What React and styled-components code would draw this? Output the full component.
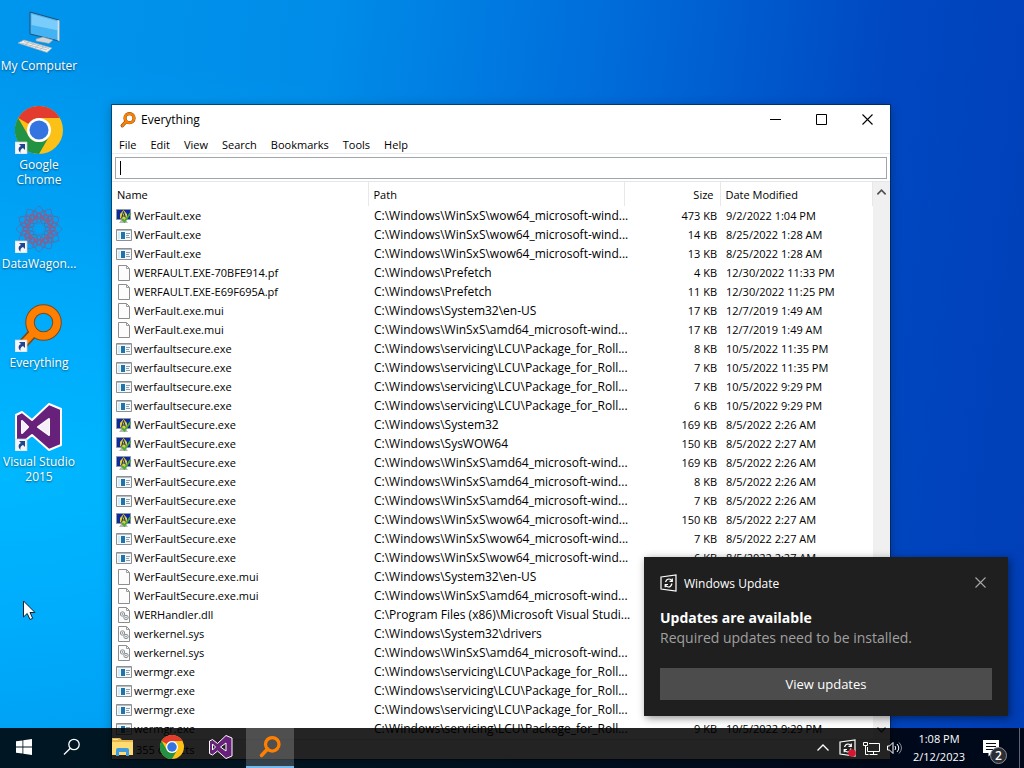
import React from 'react'
import styled, { createGlobalStyle } from 'styled-components'

const GlobalStyle = createGlobalStyle`
  * {
    box-sizing: border-box;
  }

  body {
    margin: 0;
    font-family: 'Open Sans', 'Noto Sans', sans-serif;
    font-size: 12px;
    overflow: hidden;
  }

  button,
  input {
    font: inherit;
    color: inherit;
    border: 0;
    margin: 0;
    padding: 0;
    background: none;
  }
`

const Desktop = styled.main`
  position: relative;
  min-height: 100vh;
  background:
    radial-gradient(ellipse at 0% 62%, #00b8ff 0%, rgba(0, 176, 255, 0.85) 22%, rgba(0, 150, 245, 0) 62%),
    linear-gradient(97deg, #0096ee 0%, #008ce8 30%, #006cda 55%, #0048c2 80%, #003eb6 100%);
`

const Shortcuts = styled.nav`
  display: flex;
  flex-direction: column;
  width: 78px;
`

const Shortcut = styled.a`
  display: flex;
  flex-direction: column;
  align-items: center;
  gap: 3px;
  height: 99px;
  padding-top: 7px;
  color: #fff;
  line-height: 15px;
  text-align: center;
  text-decoration: none;
  text-shadow: 0 1px 2px rgba(0, 0, 0, 0.5);
`

const AppWindow = styled.section`
  position: absolute;
  top: 104px;
  right: 133px;
  bottom: 8px;
  left: 111px;
  display: flex;
  flex-direction: column;
  border: 1px solid rgba(0, 30, 60, 0.6);
  background: #fff;
  background-clip: padding-box;
  color: #000;
  box-shadow: 0 2px 10px rgba(0, 0, 0, 0.25);
`

const TitleBar = styled.header`
  display: flex;
  align-items: center;
  height: 29px;
  padding-left: 8px;
`

const WindowTitle = styled.h1`
  flex: 1;
  margin: 0 0 0 5px;
  font-size: 12px;
  font-weight: 400;
`

const CaptionButton = styled.button`
  display: grid;
  place-items: center;
  width: 46px;
  height: 29px;
`

const MenuBar = styled.nav`
  display: flex;
  height: 20px;
  border-bottom: 1px solid #ebebeb;
  font-size: 11px;
`

const MenuButton = styled.button`
  padding: 2px 7px 0;
  line-height: 17px;
`

const SearchBox = styled.div`
  display: flex;
  align-items: center;
  height: 22px;
  margin: 3px 3px 2px;
  padding: 0 4px;
  border: 1px solid #a0a5a8;
`

const Caret = styled.span`
  width: 1px;
  height: 14px;
  background: #000;
`

const SearchInput = styled.input`
  flex: 1;
  outline: none;
  caret-color: transparent;
`

const ListArea = styled.div`
  display: flex;
  flex: 1;
  min-height: 0;
  border-top: 1px solid #e3e6e8;
  overflow: hidden;
`

const TableArea = styled.div`
  flex: 1;
  min-width: 0;
`

const FileTable = styled.table`
  width: 100%;
  table-layout: fixed;
  border-collapse: collapse;
  font-size: 11px;
  white-space: nowrap;
`

const HeadCell = styled.th`
  height: 24px;
  padding: 0 6px 0 5px;
  border-right: 1px solid #e8e8e8;
  font-weight: 400;
  text-align: ${(props) => props.$align || 'left'};
`

const Cell = styled.td`
  height: 19px;
  padding: 0 3px 0 6px;
  line-height: 19px;
  text-align: ${(props) => props.$align || 'left'};
`

const NameCell = styled(Cell)`
  padding-left: 4px;
`

const PathCell = styled(Cell)`
  padding-right: 0;
  font-size: 12px;
`

const FileName = styled.span`
  display: flex;
  align-items: center;
  gap: 2px;
  height: 19px;
`

const ScrollTrack = styled.div`
  display: flex;
  flex-direction: column;
  justify-content: space-between;
  width: 17px;
  background: #f0f0f0;
`

const ScrollButton = styled.button`
  display: grid;
  place-items: center;
  height: 20px;
`

const StatusBar = styled.footer`
  height: 20px;
  padding-left: 24px;
  border-top: 1px solid #d7d7d7;
  background: #f8f8f8;
  font-size: 11px;
  line-height: 20px;
`

const Toast = styled.aside`
  position: absolute;
  right: 16px;
  bottom: 52px;
  width: 364px;
  padding: 16px;
  background: #1f1f1f;
  color: #fff;
  box-shadow: 2px 2px 8px rgba(0, 0, 0, 0.45);
`

const ToastHeader = styled.div`
  display: flex;
  align-items: center;
  gap: 7px;
  height: 20px;
  padding-right: 6px;
`

const ToastApp = styled.span`
  flex: 1;
`

const ToastTitle = styled.h2`
  margin: 15px 0 0;
  font-size: 14px;
  font-weight: 700;
  line-height: 20px;
`

const ToastText = styled.p`
  margin: 0 0 20px;
  color: #a0a0a0;
  font-size: 14px;
  line-height: 20px;
`

const ToastAction = styled.button`
  display: block;
  width: 100%;
  height: 32px;
  background: #4c4c4c;
  font-size: 13px;
`

const Taskbar = styled.footer`
  position: absolute;
  right: 0;
  bottom: 0;
  left: 0;
  display: flex;
  height: 40px;
  background: rgba(0, 0, 0, 0.86);
  color: #fff;
`

const TaskButton = styled.button`
  display: grid;
  place-items: center;
  width: 48px;
  height: 40px;
  border-bottom: 2px solid ${(props) => (props.$active ? '#76b9ed' : 'transparent')};
  background: ${(props) => (props.$active ? 'rgba(255, 255, 255, 0.2)' : 'none')};
  background-clip: padding-box;
`

const PinnedApps = styled.div`
  display: flex;
  flex: 1;
  gap: 1px;
  padding-left: 3px;
`

const TrayButton = styled.button`
  display: grid;
  place-items: center;
  width: 24px;
  height: 40px;
`

const Clock = styled.time`
  width: 64px;
  padding-top: 2px;
  font-size: 11px;
  line-height: 18px;
  text-align: center;
`

const ActionCenter = styled(TaskButton)`
  position: relative;
  padding-right: 8px;
  border-bottom: 0;
`

const Badge = styled.span`
  position: absolute;
  right: 12px;
  bottom: 4px;
  width: 17px;
  height: 17px;
  border: 1px solid #8a8f96;
  border-radius: 50%;
  background: #2b2e34;
  font-weight: 600;
  line-height: 15px;
`

const ShowDesktop = styled.button`
  width: 5px;
  border-left: 1px solid #5b6672;
`

const Pointer = styled.svg`
  position: absolute;
  top: 600px;
  left: 22px;
`

const ShortcutArrow = () => (
  <g>
    <path d="M0 36h12v12H0z" fill="#f4f6fa" stroke="#c8d0da" strokeWidth=".7" />
    <path d="M4 38h6v6L8 42c-2 1-3 2-2.500 4.800C2.500 44 3.500 41 6 40z" fill="#20458c" />
  </g>
)

const ComputerIcon = () => (
  <svg width="48" height="48" viewBox="0 0 48 48">
    <path d="M15 5l29 8v21l-29-7z" fill="#44b3f4" stroke="#244f70" />
    <path d="M16.500 7l26 7.200v9L16.500 18z" fill="#7acdfa" />
    <path d="M42.500 13v20.500l2 .5V13.500z" fill="#d8e1e8" />
    <path d="M21 32l7-2 10 3-4 3.500-13-2.500z" fill="#cfd5d8" stroke="#8798a4" strokeWidth=".6" />
    <path d="M3 36l6-3 28 8-5 4.500z" fill="#eef0ef" stroke="#9babb5" strokeWidth=".7" />
    <path d="M6 36l26 7M9 34.500l25 7M10 38l4-3M15 39.500l4-3M20 41l4-3M25 42.500l4-3" stroke="#adb7bd" strokeWidth=".8" />
  </svg>
)

const ChromeIcon = ({ size = 48, linked }) => (
  <svg width={size} height={size} viewBox="0 0 48 48">
    <circle cx="24" cy="24" r="24" fill="#fbc116" />
    <path d="M3.200 12A24 24 0 0 1 44.800 12H24a12 12 0 0 0-10.400 6z" fill="#e33b2e" />
    <path d="M3.200 12A24 24 0 0 0 24 48l10.400-18A12 12 0 0 1 13.600 30z" fill="#229342" />
    <circle cx="24" cy="24" r="12" fill="#fff" />
    <circle cx="24" cy="24" r="9.500" fill="#3474e0" />
    {linked && <ShortcutArrow />}
  </svg>
)

const petals = [0, 30, 60, 90, 120, 150, 180, 210, 240, 270, 300, 330]

const DataWagonIcon = () => (
  <svg width="48" height="48" viewBox="0 0 48 48">
    <g fill="none" stroke="#4f72ae" strokeWidth=".9">
      {petals.map((angle) => (
        <g key={angle} transform={`rotate(${angle} 24 24)`}>
          <path d="M24 18c-8-5-7-12 0-17 7 5 8 12 0 17z" />
          <path d="M18 14l10-9M30 14L20 5" stroke="#8b5f91" />
          <circle cx="24" cy="11" r="3" stroke="#a0567c" />
        </g>
      ))}
      <circle cx="24" cy="24" r="5" stroke="#2d8fce" />
      <circle cx="24" cy="24" r="11" stroke="#9a5b80" />
    </g>
    <ShortcutArrow />
  </svg>
)

const EverythingIcon = ({ size = 48, linked, flat }) => (
  <svg width={size} height={size} viewBox="0 0 48 48">
    {!flat && (
      <g fill="none" stroke="#7a4a1a">
        <path d="M18 29L7 41" strokeWidth="10" strokeLinecap="round" />
        <circle cx="28.500" cy="18.500" r="13.500" strokeWidth="9.500" />
      </g>
    )}
    <g fill="none" stroke="#ff8000">
      <path d="M19 28L7 41" strokeWidth="7" strokeLinecap="round" />
      <circle cx="28.500" cy="18.500" r="13.500" strokeWidth={flat ? 6.5 : 7.5} />
    </g>
    {linked && <ShortcutArrow />}
  </svg>
)

const VisualStudioIcon = ({ size = 48, linked }) => (
  <svg width={size} height={size} viewBox="0 0 48 48">
    <path
      d="M1 12l6-3 10 8L34 1l12 5v36l-12 5-17-15-10 8-6-3zM7 18v12l6-6zM34 16v16l-11-8z"
      fill="#68217a"
      stroke="#fff"
      strokeWidth="2"
      strokeLinejoin="round"
      fillRule="evenodd"
    />
    {linked && <path d="M7 18v12l6-6zM34 16v16l-11-8z" fill="#f6effa" />}
    {linked && <ShortcutArrow />}
  </svg>
)

const ExplorerIcon = () => (
  <svg width="22" height="20" viewBox="0 0 22 20">
    <path d="M0 1h8l2 2h11v15H0z" fill="#e9b64b" />
    <path d="M0 5h21v13H0z" fill="#ffdc73" />
    <path d="M4 19v-6q0-2 2-2h9q2 0 2 2v6h-3v-4H7v4z" fill="#3f9bdd" />
    <path d="M1 2h5v1H1z" fill="#fff0a8" />
  </svg>
)

const WindowsIcon = () => (
  <svg width="16" height="16" viewBox="0 0 16 16" fill="#fff">
    <path d="M0 2.300l6.500-.9v6.200H0zM7.300 1.300L16 0v7.600H7.300zM0 8.400h6.500v6.200L0 13.700zM7.300 8.400H16V16l-8.700-1.300z" />
  </svg>
)

const MagnifierIcon = () => (
  <svg width="18" height="18" viewBox="0 0 18 18" fill="none" stroke="#fff" strokeWidth="1.300">
    <circle cx="11" cy="6.500" r="5.200" />
    <path d="M7.300 10.200L1 16.500" />
  </svg>
)

const UpdateIcon = ({ alert }) => (
  <svg width="17" height="18" viewBox="0 0 17 18" fill="none" stroke="#fff" strokeWidth="1.200">
    <path d="M1 3l15-2v16L1 15z" />
    <path d="M5.500 8Q6.500 5 9 5q2 0 3 2M12.300 4.500v2.800H9.500M12 9.500Q11 13 8.500 13q-2 0-3-2M5.200 13.300v-2.800H8" />
    {alert && <circle cx="13" cy="14" r="3.800" fill="#d91630" stroke="none" />}
  </svg>
)

const ChevronIcon = ({ down, size = 12, color = '#fff', weight = 1.3 }) => (
  <svg width={size} height={size} viewBox="0 0 12 12" fill="none" stroke={color} strokeWidth={weight}>
    <path d={down ? 'M.5 3.500L6 9l5.500-5.500' : 'M.5 8.500L6 3l5.500 5.500'} />
  </svg>
)

const NetworkIcon = () => (
  <svg width="17" height="15" viewBox="0 0 17 15" fill="none" stroke="#fff">
    <path d="M6 2.500h10.500v8H4.500V6M10.500 10.500v3M6.500 13.500h8M.5 1.500h4v3h-4zM2.500 5v8.500h3" />
  </svg>
)

const VolumeIcon = () => (
  <svg width="16" height="14" viewBox="0 0 16 14" fill="none" stroke="#fff">
    <path d="M.5 5v4h2l3.500 3.500v-11L2.500 5z" />
    <path d="M8 5q1.500 2 0 4M10 3q3.500 4 0 8" />
    <path d="M12 1.500q5 5.500 0 11" stroke="#8c8f94" />
  </svg>
)

const MessageIcon = () => (
  <svg width="16" height="17" viewBox="0 0 16 17">
    <path d="M0 0h16v13H9l-3.500 3.500V13H0z" fill="#fff" />
    <path d="M3 3.500h10M3 6.500h10M3 9.500h7" stroke="#050b1c" />
  </svg>
)

const CloseIcon = ({ color = '#000' }) => (
  <svg width="11" height="11" viewBox="0 0 11 11" stroke={color} strokeWidth="1.100">
    <path d="M.5.5l10 10M10.500.5l-10 10" />
  </svg>
)

const FileIcon = ({ kind }) => {
  if (kind === 'secure') {
    return (
      <svg width="16" height="16" viewBox="0 0 16 16">
        <path d="M.5 1.500h14v10H.5z" fill="#0f2aa0" stroke="#8f9aa8" />
        <path d="M5 12h5l2 3H3z" fill="#b4b8b0" />
        <path d="M7.500 2L11 6v4l-3.500 3L4 10V6z" fill="#e3cf3c" />
        <path d="M5.500 10.500l2-7 2 6M6 8h3" stroke="#1b3568" fill="none" />
        <path d="M6 11l2.500 2.500L14.500 5" stroke="#4caa3c" strokeWidth="2" fill="none" />
      </svg>
    )
  }
  if (kind === 'exe') {
    return (
      <svg width="16" height="16" viewBox="0 0 16 16">
        <path d="M.5 2.500h15v11H.5z" fill="#f6f8f8" stroke="#8a9094" />
        <path d="M1 3h14v1H1z" fill="#b5bcc0" />
        <path d="M2 5h2v7H2z" fill="#d4ecf6" />
        <path d="M5 5h4v7H5z" fill="#2073ad" />
        <path d="M10 6.500h4M10 8.500h3M10 10.500h4" stroke="#8ba1b2" />
      </svg>
    )
  }
  return (
    <svg width="16" height="16" viewBox="0 0 16 16">
      <path d="M2.500.500h8l3 3v12h-11z" fill="#fcfcfc" stroke="#8d8d8d" />
      <path d="M10.500.500v3h3" fill="none" stroke="#9d9d9d" />
      {kind === 'system' && (
        <g fill="none" stroke="#8a9094">
          <circle cx="6.500" cy="7" r="2.200" />
          <circle cx="6.500" cy="7" r=".6" />
          <circle cx="10" cy="10.500" r="2.200" />
          <circle cx="10" cy="10.500" r=".6" />
        </g>
      )}
    </svg>
  )
}

const SXS_WOW = 'C:\\Windows\\WinSxS\\wow64_microsoft-wind...'
const SXS_AMD = 'C:\\Windows\\WinSxS\\amd64_microsoft-wind...'
const SERVICING = 'C:\\Windows\\servicing\\LCU\\Package_for_Roll...'
const PREFETCH = 'C:\\Windows\\Prefetch'

const files = [
  ['secure', 'WerFault.exe', SXS_WOW, '473 KB', '9/2/2022 1:04 PM'],
  ['exe', 'WerFault.exe', SXS_WOW, '14 KB', '8/25/2022 1:28 AM'],
  ['exe', 'WerFault.exe', SXS_WOW, '13 KB', '8/25/2022 1:28 AM'],
  ['file', 'WERFAULT.EXE-70BFE914.pf', PREFETCH, '4 KB', '12/30/2022 11:33 PM'],
  ['file', 'WERFAULT.EXE-E69F695A.pf', PREFETCH, '11 KB', '12/30/2022 11:25 PM'],
  ['file', 'WerFault.exe.mui', 'C:\\Windows\\System32\\en-US', '17 KB', '12/7/2019 1:49 AM'],
  ['file', 'WerFault.exe.mui', SXS_AMD, '17 KB', '12/7/2019 1:49 AM'],
  ['exe', 'werfaultsecure.exe', SERVICING, '8 KB', '10/5/2022 11:35 PM'],
  ['exe', 'werfaultsecure.exe', SERVICING, '7 KB', '10/5/2022 11:35 PM'],
  ['exe', 'werfaultsecure.exe', SERVICING, '7 KB', '10/5/2022 9:29 PM'],
  ['exe', 'werfaultsecure.exe', SERVICING, '6 KB', '10/5/2022 9:29 PM'],
  ['secure', 'WerFaultSecure.exe', 'C:\\Windows\\System32', '169 KB', '8/5/2022 2:26 AM'],
  ['secure', 'WerFaultSecure.exe', 'C:\\Windows\\SysWOW64', '150 KB', '8/5/2022 2:27 AM'],
  ['secure', 'WerFaultSecure.exe', SXS_AMD, '169 KB', '8/5/2022 2:26 AM'],
  ['exe', 'WerFaultSecure.exe', SXS_AMD, '8 KB', '8/5/2022 2:26 AM'],
  ['exe', 'WerFaultSecure.exe', SXS_AMD, '7 KB', '8/5/2022 2:26 AM'],
  ['secure', 'WerFaultSecure.exe', SXS_WOW, '150 KB', '8/5/2022 2:27 AM'],
  ['exe', 'WerFaultSecure.exe', SXS_WOW, '7 KB', '8/5/2022 2:27 AM'],
  ['exe', 'WerFaultSecure.exe', SXS_WOW, '6 KB', '8/5/2022 2:27 AM'],
  ['file', 'WerFaultSecure.exe.mui', 'C:\\Windows\\System32\\en-US', '', ''],
  ['file', 'WerFaultSecure.exe.mui', SXS_AMD, '', ''],
  ['system', 'WERHandler.dll', 'C:\\Program Files (x86)\\Microsoft Visual Studi...', '', ''],
  ['system', 'werkernel.sys', 'C:\\Windows\\System32\\drivers', '', ''],
  ['system', 'werkernel.sys', SXS_AMD, '', ''],
  ['exe', 'wermgr.exe', SERVICING, '', ''],
  ['exe', 'wermgr.exe', SERVICING, '', ''],
  ['exe', 'wermgr.exe', SERVICING, '', ''],
  ['exe', 'wermgr.exe', SERVICING, '9 KB', '10/5/2022 9:29 PM'],
]

const menus = ['File', 'Edit', 'View', 'Search', 'Bookmarks', 'Tools', 'Help']

const FileList = () => (
  <ListArea>
    <TableArea>
      <FileTable>
        <colgroup>
          <col width="256" />
          <col width="256" />
          <col width="96" />
          <col />
        </colgroup>
        <thead>
          <tr>
            <HeadCell>Name</HeadCell>
            <HeadCell>Path</HeadCell>
            <HeadCell $align="right">Size</HeadCell>
            <HeadCell>Date Modified</HeadCell>
          </tr>
        </thead>
        <tbody>
          {files.map(([kind, name, path, size, date], index) => (
            <tr key={index}>
              <NameCell>
                <FileName>
                  <FileIcon kind={kind} />
                  {name}
                </FileName>
              </NameCell>
              <PathCell>{path}</PathCell>
              <Cell $align="right">{size}</Cell>
              <Cell>{date}</Cell>
            </tr>
          ))}
        </tbody>
      </FileTable>
    </TableArea>
    <ScrollTrack>
      <ScrollButton aria-label="Scroll up">
        <ChevronIcon size={9} color="#505050" weight={2.2} />
      </ScrollButton>
      <ScrollButton aria-label="Scroll down">
        <ChevronIcon down size={9} color="#505050" weight={2.2} />
      </ScrollButton>
    </ScrollTrack>
  </ListArea>
)

const EverythingWindow = () => (
  <AppWindow>
    <TitleBar>
      <EverythingIcon size={16} />
      <WindowTitle>Everything</WindowTitle>
      <CaptionButton aria-label="Minimize">
        <svg width="11" height="11" viewBox="0 0 11 11" stroke="#000">
          <path d="M0 5.500h11" />
        </svg>
      </CaptionButton>
      <CaptionButton aria-label="Maximize">
        <svg width="11" height="11" viewBox="0 0 11 11" fill="none" stroke="#000">
          <path d="M.5.500h10v10H.5z" />
        </svg>
      </CaptionButton>
      <CaptionButton aria-label="Close">
        <CloseIcon />
      </CaptionButton>
    </TitleBar>
    <MenuBar>
      {menus.map((menu) => (
        <MenuButton key={menu}>{menu}</MenuButton>
      ))}
    </MenuBar>
    <SearchBox>
      <Caret />
      <SearchInput type="text" aria-label="Search files" />
    </SearchBox>
    <FileList />
    <StatusBar>355 objects</StatusBar>
  </AppWindow>
)

const UpdateToast = () => (
  <Toast>
    <ToastHeader>
      <UpdateIcon />
      <ToastApp>Windows Update</ToastApp>
      <button aria-label="Dismiss">
        <CloseIcon color="#a8a8a8" />
      </button>
    </ToastHeader>
    <ToastTitle>Updates are available</ToastTitle>
    <ToastText>Required updates need to be installed.</ToastText>
    <ToastAction>View updates</ToastAction>
  </Toast>
)

const App = () => (
  <Desktop>
    <GlobalStyle />
    <Shortcuts>
      <Shortcut href="#computer">
        <ComputerIcon />
        My Computer
      </Shortcut>
      <Shortcut href="#chrome">
        <ChromeIcon linked />
        Google Chrome
      </Shortcut>
      <Shortcut href="#datawagon">
        <DataWagonIcon />
        DataWagon...
      </Shortcut>
      <Shortcut href="#everything">
        <EverythingIcon linked />
        Everything
      </Shortcut>
      <Shortcut href="#visual-studio">
        <VisualStudioIcon linked />
        Visual Studio 2015
      </Shortcut>
    </Shortcuts>
    <EverythingWindow />
    <UpdateToast />
    <Taskbar>
      <TaskButton aria-label="Start">
        <WindowsIcon />
      </TaskButton>
      <TaskButton aria-label="Search">
        <MagnifierIcon />
      </TaskButton>
      <PinnedApps>
        <TaskButton aria-label="File Explorer">
          <ExplorerIcon />
        </TaskButton>
        <TaskButton aria-label="Google Chrome">
          <ChromeIcon size={24} />
        </TaskButton>
        <TaskButton aria-label="Visual Studio">
          <VisualStudioIcon size={24} />
        </TaskButton>
        <TaskButton aria-label="Everything" $active>
          <EverythingIcon size={24} flat />
        </TaskButton>
      </PinnedApps>
      <TrayButton aria-label="Show hidden icons">
        <ChevronIcon />
      </TrayButton>
      <TrayButton aria-label="Windows Update">
        <UpdateIcon alert />
      </TrayButton>
      <TrayButton aria-label="Network">
        <NetworkIcon />
      </TrayButton>
      <TrayButton aria-label="Volume">
        <VolumeIcon />
      </TrayButton>
      <Clock>
        1:08 PM
        <br />
        2/12/2023
      </Clock>
      <ActionCenter aria-label="Notifications">
        <MessageIcon />
        <Badge>2</Badge>
      </ActionCenter>
      <ShowDesktop aria-label="Show desktop" />
    </Taskbar>
    <Pointer width="14" height="21" viewBox="0 0 14 21">
      <path d="M1.500 1v16l3.700-3.500L8 19.500l2.700-1.200L8 12.500h5z" fill="#fff" stroke="#15202b" />
    </Pointer>
  </Desktop>
)

export default App
